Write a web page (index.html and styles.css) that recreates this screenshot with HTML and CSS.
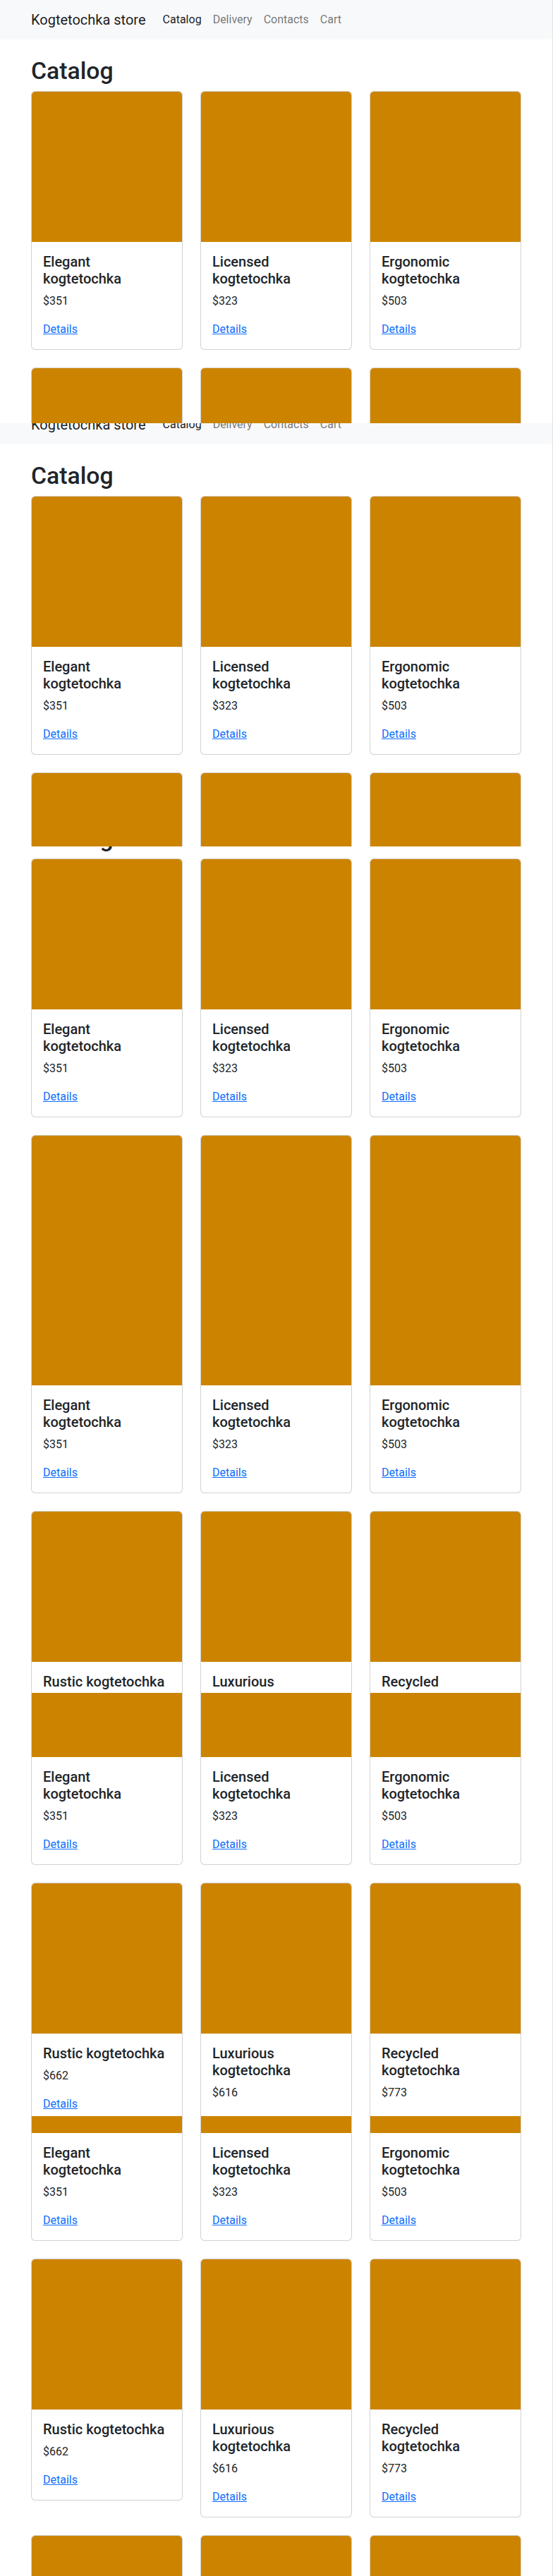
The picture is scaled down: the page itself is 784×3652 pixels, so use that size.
FILE: index.html
```html
<!DOCTYPE html>
<html lang="en">
<head>
<meta charset="utf-8">
<title>Kogtetochka store</title>
<link rel="stylesheet" href="styles.css">
</head>
<body>
<div class="shot">

<section class="slice s1"><div class="page">
  <nav class="navbar"><div class="container nav-inner"><a class="brand" href="#">Kogtetochka store</a><ul class="nav-links"><li><a class="nav-link active" href="#">Catalog</a></li><li><a class="nav-link" href="#">Delivery</a></li><li><a class="nav-link" href="#">Contacts</a></li><li><a class="nav-link" href="#">Cart</a></li></ul></div></nav>
  <main class="container content"><h1 class="title">Catalog</h1>
    <div class="grid">
      <div class="card"><div class="card-img"></div><div class="card-body"><h5 class="card-title">Elegant kogtetochka</h5><p class="price">$351</p><a class="details" href="#">Details</a></div></div>
      <div class="card"><div class="card-img"></div><div class="card-body"><h5 class="card-title">Licensed kogtetochka</h5><p class="price">$323</p><a class="details" href="#">Details</a></div></div>
      <div class="card"><div class="card-img"></div><div class="card-body"><h5 class="card-title">Ergonomic kogtetochka</h5><p class="price">$503</p><a class="details" href="#">Details</a></div></div>
      <div class="card"><div class="card-img"></div></div>
      <div class="card"><div class="card-img"></div></div>
      <div class="card"><div class="card-img"></div></div>
    </div>
  </main>
</div></section>

<section class="slice s2"><div class="page">
  <nav class="navbar"><div class="container nav-inner"><a class="brand" href="#">Kogtetochka store</a><ul class="nav-links"><li><a class="nav-link active" href="#">Catalog</a></li><li><a class="nav-link" href="#">Delivery</a></li><li><a class="nav-link" href="#">Contacts</a></li><li><a class="nav-link" href="#">Cart</a></li></ul></div></nav>
  <main class="container content"><h1 class="title">Catalog</h1>
    <div class="grid">
      <div class="card"><div class="card-img"></div><div class="card-body"><h5 class="card-title">Elegant kogtetochka</h5><p class="price">$351</p><a class="details" href="#">Details</a></div></div>
      <div class="card"><div class="card-img"></div><div class="card-body"><h5 class="card-title">Licensed kogtetochka</h5><p class="price">$323</p><a class="details" href="#">Details</a></div></div>
      <div class="card"><div class="card-img"></div><div class="card-body"><h5 class="card-title">Ergonomic kogtetochka</h5><p class="price">$503</p><a class="details" href="#">Details</a></div></div>
      <div class="card"><div class="card-img"></div></div>
      <div class="card"><div class="card-img"></div></div>
      <div class="card"><div class="card-img"></div></div>
    </div>
  </main>
</div></section>

<section class="slice s3"><div class="page">
  <nav class="navbar"><div class="container nav-inner"><a class="brand" href="#">Kogtetochka store</a><ul class="nav-links"><li><a class="nav-link active" href="#">Catalog</a></li><li><a class="nav-link" href="#">Delivery</a></li><li><a class="nav-link" href="#">Contacts</a></li><li><a class="nav-link" href="#">Cart</a></li></ul></div></nav>
  <main class="container content"><h1 class="title">Catalog</h1>
    <div class="grid">
      <div class="card"><div class="card-img"></div><div class="card-body"><h5 class="card-title">Elegant kogtetochka</h5><p class="price">$351</p><a class="details" href="#">Details</a></div></div>
      <div class="card"><div class="card-img"></div><div class="card-body"><h5 class="card-title">Licensed kogtetochka</h5><p class="price">$323</p><a class="details" href="#">Details</a></div></div>
      <div class="card"><div class="card-img"></div><div class="card-body"><h5 class="card-title">Ergonomic kogtetochka</h5><p class="price">$503</p><a class="details" href="#">Details</a></div></div>
      <div class="card"><div class="card-img"></div></div>
      <div class="card"><div class="card-img"></div></div>
      <div class="card"><div class="card-img"></div></div>
    </div>
  </main>
</div></section>

<section class="slice s4"><div class="page">
  <nav class="navbar"><div class="container nav-inner"><a class="brand" href="#">Kogtetochka store</a><ul class="nav-links"><li><a class="nav-link active" href="#">Catalog</a></li><li><a class="nav-link" href="#">Delivery</a></li><li><a class="nav-link" href="#">Contacts</a></li><li><a class="nav-link" href="#">Cart</a></li></ul></div></nav>
  <main class="container content"><h1 class="title">Catalog</h1>
    <div class="grid">
      <div class="card"><div class="card-img"></div><div class="card-body"><h5 class="card-title">Elegant kogtetochka</h5><p class="price">$351</p><a class="details" href="#">Details</a></div></div>
      <div class="card"><div class="card-img"></div><div class="card-body"><h5 class="card-title">Licensed kogtetochka</h5><p class="price">$323</p><a class="details" href="#">Details</a></div></div>
      <div class="card"><div class="card-img"></div><div class="card-body"><h5 class="card-title">Ergonomic kogtetochka</h5><p class="price">$503</p><a class="details" href="#">Details</a></div></div>
      <div class="card"><div class="card-img"></div><div class="card-body"><h5 class="card-title">Rustic kogtetochka</h5><p class="price">$662</p><a class="details" href="#">Details</a></div></div>
      <div class="card"><div class="card-img"></div><div class="card-body"><h5 class="card-title">Luxurious kogtetochka</h5><p class="price">$616</p><a class="details" href="#">Details</a></div></div>
      <div class="card"><div class="card-img"></div><div class="card-body"><h5 class="card-title">Recycled kogtetochka</h5><p class="price">$773</p><a class="details" href="#">Details</a></div></div>
    </div>
  </main>
</div></section>

<section class="slice s5"><div class="page">
  <nav class="navbar"><div class="container nav-inner"><a class="brand" href="#">Kogtetochka store</a><ul class="nav-links"><li><a class="nav-link active" href="#">Catalog</a></li><li><a class="nav-link" href="#">Delivery</a></li><li><a class="nav-link" href="#">Contacts</a></li><li><a class="nav-link" href="#">Cart</a></li></ul></div></nav>
  <main class="container content"><h1 class="title">Catalog</h1>
    <div class="grid">
      <div class="card"><div class="card-img"></div><div class="card-body"><h5 class="card-title">Elegant kogtetochka</h5><p class="price">$351</p><a class="details" href="#">Details</a></div></div>
      <div class="card"><div class="card-img"></div><div class="card-body"><h5 class="card-title">Licensed kogtetochka</h5><p class="price">$323</p><a class="details" href="#">Details</a></div></div>
      <div class="card"><div class="card-img"></div><div class="card-body"><h5 class="card-title">Ergonomic kogtetochka</h5><p class="price">$503</p><a class="details" href="#">Details</a></div></div>
      <div class="card"><div class="card-img"></div><div class="card-body"><h5 class="card-title">Rustic kogtetochka</h5><p class="price">$662</p><a class="details" href="#">Details</a></div></div>
      <div class="card"><div class="card-img"></div><div class="card-body"><h5 class="card-title">Luxurious kogtetochka</h5><p class="price">$616</p><a class="details" href="#">Details</a></div></div>
      <div class="card"><div class="card-img"></div><div class="card-body"><h5 class="card-title">Recycled kogtetochka</h5><p class="price">$773</p><a class="details" href="#">Details</a></div></div>
    </div>
  </main>
</div></section>

<section class="slice s6"><div class="page">
  <nav class="navbar"><div class="container nav-inner"><a class="brand" href="#">Kogtetochka store</a><ul class="nav-links"><li><a class="nav-link active" href="#">Catalog</a></li><li><a class="nav-link" href="#">Delivery</a></li><li><a class="nav-link" href="#">Contacts</a></li><li><a class="nav-link" href="#">Cart</a></li></ul></div></nav>
  <main class="container content"><h1 class="title">Catalog</h1>
    <div class="grid">
      <div class="card"><div class="card-img"></div><div class="card-body"><h5 class="card-title">Elegant kogtetochka</h5><p class="price">$351</p><a class="details" href="#">Details</a></div></div>
      <div class="card"><div class="card-img"></div><div class="card-body"><h5 class="card-title">Licensed kogtetochka</h5><p class="price">$323</p><a class="details" href="#">Details</a></div></div>
      <div class="card"><div class="card-img"></div><div class="card-body"><h5 class="card-title">Ergonomic kogtetochka</h5><p class="price">$503</p><a class="details" href="#">Details</a></div></div>
      <div class="card"><div class="card-img"></div><div class="card-body"><h5 class="card-title">Rustic kogtetochka</h5><p class="price">$662</p><a class="details" href="#">Details</a></div></div>
      <div class="card"><div class="card-img"></div><div class="card-body"><h5 class="card-title">Luxurious kogtetochka</h5><p class="price">$616</p><a class="details" href="#">Details</a></div></div>
      <div class="card"><div class="card-img"></div><div class="card-body"><h5 class="card-title">Recycled kogtetochka</h5><p class="price">$773</p><a class="details" href="#">Details</a></div></div>
      <div class="card"><div class="card-img"></div></div>
      <div class="card"><div class="card-img"></div></div>
      <div class="card"><div class="card-img"></div></div>
    </div>
  </main>
</div></section>

</div>
</body>
</html>
```

FILE: styles.css
```css
* { box-sizing: border-box; }

html, body {
  margin: 0;
  padding: 0;
  background: #fff;
}

body {
  font-family: Roboto, "Liberation Sans", sans-serif;
  font-size: 16px;
  line-height: 24px;
  color: #212529;
}

.shot {
  position: relative;
  width: 784px;
}

.shot::after {
  content: "";
  position: absolute;
  top: 0;
  bottom: 0;
  left: 783px;
  width: 1px;
  background: #e2e2e2;
}

.slice {
  height: 600px;
  overflow: hidden;
}

.slice.s6 { height: 652px; }

.page { display: flow-root; }

.s2 .page { margin-top: -26px; }
.s3 .page { margin-top: -112px; }
.s4 .page { margin-top: -179px; }
.s5 .page { margin-top: -252px; }
.s6 .page { margin-top: -319px; }

.container {
  width: 720px;
  margin: 0 auto;
  padding: 0 12px;
}

/* navbar */
.navbar {
  background: #f8f9fa;
  padding: 8px 0;
}

.nav-inner {
  display: flex;
  align-items: center;
}

.brand {
  font-size: 20px;
  line-height: 30px;
  padding: 5px 0;
  margin-right: 16px;
  color: rgba(0, 0, 0, 0.9);
  text-decoration: none;
  white-space: nowrap;
}

.nav-links {
  display: flex;
  list-style: none;
  margin: 0;
  padding: 0;
}

.nav-link {
  display: block;
  padding: 8px;
  line-height: 24px;
  color: rgba(0, 0, 0, 0.55);
  text-decoration: none;
}

.nav-link.active { color: rgba(0, 0, 0, 0.9); }

/* content */
.content { margin-top: 24px; }

.title {
  margin: 0 0 8px;
  font-size: 33.76px;
  font-weight: 500;
  line-height: 41px;
  color: #212529;
}

.grid {
  display: grid;
  grid-template-columns: repeat(3, 215px);
  column-gap: 25px;
  row-gap: 25px;
  align-items: start;
}

.card {
  background: #fff;
  border: 1px solid rgba(0, 0, 0, 0.175);
  border-radius: 6px;
  overflow: hidden;
}

.card-img {
  height: 213px;
  background: #cc8400;
}

.card-body {
  padding: 16px;
}

.card-title {
  margin: 0 0 8px;
  font-size: 20px;
  font-weight: 500;
  line-height: 24px;
  color: #212529;
}

.price {
  margin: 0 0 16px;
}

.details {
  color: #0d6efd;
  text-decoration: underline;
}
```
